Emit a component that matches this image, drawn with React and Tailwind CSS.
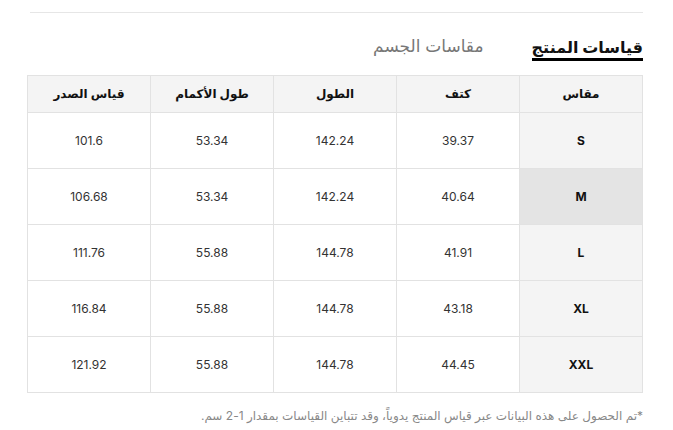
const HEADERS = ['مقاس', 'كتف', 'الطول', 'طول الأكمام', 'قياس الصدر']

const ROWS = [
  ['S', '39.37', '142.24', '53.34', '101.6'],
  ['M', '40.64', '142.24', '53.34', '106.68'],
  ['L', '41.91', '144.78', '55.88', '111.76'],
  ['XL', '43.18', '144.78', '55.88', '116.84'],
  ['XXL', '44.45', '144.78', '55.88', '121.92'],
]

function App() {
  return (
    <div
      dir="rtl"
      className="w-[673px] h-[430px] bg-white px-[30px] pt-[12px] font-['Inter','DejaVu_Sans',sans-serif]"
    >
      <div className="border-t border-[#e6e6e6]" />

      <div className="flex items-end gap-[48px] mt-[21px] h-[27px]">
        <div className="text-[16px] leading-[22px] font-bold text-[#111] border-b-[3px] border-black">
          قياسات المنتج
        </div>
        <div className="text-[17px] leading-[22px] text-[#777] pb-[4px]">
          مقاسات الجسم
        </div>
      </div>

      <table className="mt-[14px] w-[616px] border-collapse table-fixed text-[12px] text-[#333]">
        <thead>
          <tr className="h-[37px] bg-[#f4f4f4]">
            {HEADERS.map((h) => (
              <th key={h} className="border border-[#e2e2e2] font-semibold text-[#111] text-center">
                {h}
              </th>
            ))}
          </tr>
        </thead>
        <tbody>
          {ROWS.map((row) => (
            <tr key={row[0]} className="h-[56px]">
              {row.map((cell, i) => (
                <td
                  key={i}
                  className={
                    i === 0
                      ? `border border-[#e2e2e2] text-center font-bold text-[#111] ${row[0] === 'M' ? 'bg-[#e4e4e4]' : 'bg-[#f4f4f4]'}`
                      : 'border border-[#e2e2e2] text-center'
                  }
                >
                  {cell}
                </td>
              ))}
            </tr>
          ))}
        </tbody>
      </table>

      <p className="mt-[14px] text-[12px] text-[#888]">
        *تم الحصول على هذه البيانات عبر قياس المنتج يدوياً، وقد تتباين القياسات بمقدار 1-2 سم.
      </p>
    </div>
  )
}

export default App
